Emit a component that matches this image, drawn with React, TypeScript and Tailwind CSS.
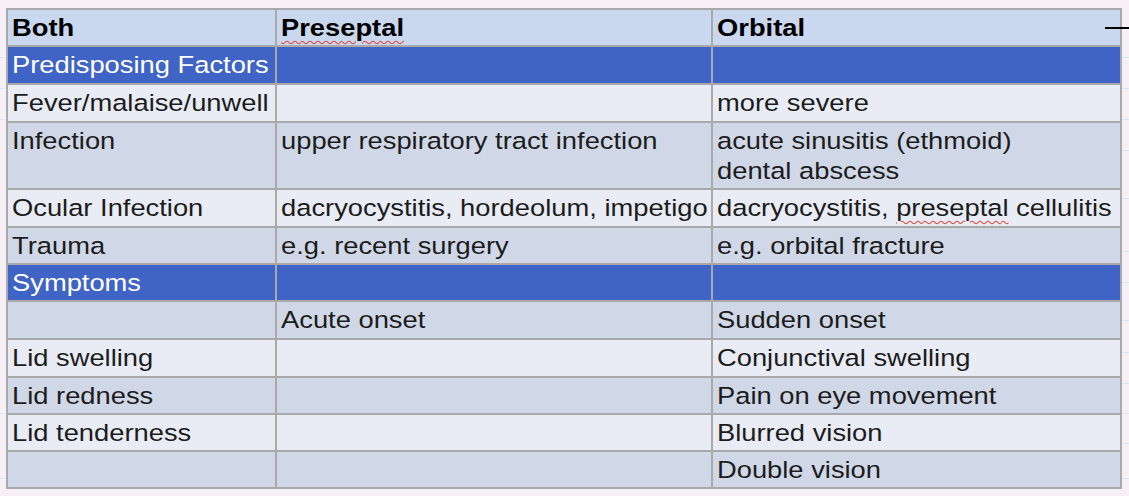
import React from "react";

type Kind = "head" | "section" | "light" | "dark";

type Row = {
  kind: Kind;
  h: string;
  cells: React.ReactNode[];
};

const T = ({ children }: { children: React.ReactNode }) => (
  <span className="inline-block origin-left scale-x-[1.115] whitespace-nowrap">{children}</span>
);

const Spell = ({ children }: { children: React.ReactNode }) => (
  <span className="underline decoration-wavy decoration-[#e2483f] decoration-1 underline-offset-[4px]">
    {children}
  </span>
);

const rows: Row[] = [
  {
    kind: "head",
    h: "h-[37px]",
    cells: [
      <T>Both</T>,
      <T>
        <Spell>Preseptal</Spell>
      </T>,
      <T>Orbital</T>,
    ],
  },
  {
    kind: "section",
    h: "h-[38px]",
    cells: [<T>Predisposing Factors</T>, null, null],
  },
  {
    kind: "light",
    h: "h-[38px]",
    cells: [<T>Fever/malaise/unwell</T>, null, <T>more severe</T>],
  },
  {
    kind: "dark",
    h: "h-[67px]",
    cells: [
      <T>Infection</T>,
      <T>upper respiratory tract infection</T>,
      <div className="flex flex-col">
        <T>acute sinusitis (ethmoid)</T>
        <T>dental abscess</T>
      </div>,
    ],
  },
  {
    kind: "light",
    h: "h-[38px]",
    cells: [
      <T>Ocular Infection</T>,
      <T>dacryocystitis, hordeolum, impetigo</T>,
      <T>
        dacryocystitis, <Spell>preseptal</Spell> cellulitis
      </T>,
    ],
  },
  {
    kind: "dark",
    h: "h-[37px]",
    cells: [<T>Trauma</T>, <T>e.g. recent surgery</T>, <T>e.g. orbital fracture</T>],
  },
  {
    kind: "section",
    h: "h-[37px]",
    cells: [<T>Symptoms</T>, null, null],
  },
  {
    kind: "dark",
    h: "h-[38px]",
    cells: [null, <T>Acute onset</T>, <T>Sudden onset</T>],
  },
  {
    kind: "light",
    h: "h-[38px]",
    cells: [<T>Lid swelling</T>, null, <T>Conjunctival swelling</T>],
  },
  {
    kind: "dark",
    h: "h-[37px]",
    cells: [<T>Lid redness</T>, null, <T>Pain on eye movement</T>],
  },
  {
    kind: "light",
    h: "h-[37px]",
    cells: [<T>Lid tenderness</T>, null, <T>Blurred vision</T>],
  },
  {
    kind: "dark",
    h: "h-[37px]",
    cells: [null, null, <T>Double vision</T>],
  },
];

const rowClass: Record<Kind, string> = {
  head: "bg-[#c9d8ee] text-black font-bold",
  section: "bg-[#3f64c5] text-white",
  light: "bg-[#e9ecf4] text-[#1c1c1c]",
  dark: "bg-[#d0d7e7] text-[#1c1c1c]",
};

export default function App() {
  const rightLines = [57, 88, 119, 150, 198, 251, 282, 320, 352, 383, 413, 443, 478];
  const leftLines = [57, 88, 119, 413, 478];
  return (
    <div className="relative w-[1129px] h-[496px] overflow-hidden bg-[#f7f0f6] pt-[8px] pl-[6px]">
      {rightLines.map((y) => (
        <div
          key={"r" + y}
          className="absolute left-[1122px] w-[7px] h-px bg-[#d9e6f3]"
          style={{ top: y }}
        />
      ))}
      {leftLines.map((y) => (
        <div
          key={"l" + y}
          className="absolute left-0 w-[5px] h-px bg-[#d9e6f3]"
          style={{ top: y }}
        />
      ))}
      <div className="absolute left-[1105px] top-[27px] w-[24px] h-[2px] bg-black" />
      <table
        className="table-fixed border-collapse w-[1114px] text-[24.5px] leading-[30px]"
        style={{ fontFamily: '"Liberation Sans", Arial, Helvetica, sans-serif' }}
      >
        <colgroup>
          <col className="w-[269px]" />
          <col className="w-[436px]" />
          <col className="w-[409px]" />
        </colgroup>
        <tbody>
          {rows.map((r, i) => (
            <tr key={i} className={`${r.h} ${rowClass[r.kind]}`}>
              {r.cells.map((c, j) => (
                <td
                  key={j}
                  className="border-2 border-[#a9a9a9] align-top pt-[3px] pb-0 pl-[4px] pr-0 overflow-visible"
                >
                  {c}
                </td>
              ))}
            </tr>
          ))}
        </tbody>
      </table>
    </div>
  );
}
